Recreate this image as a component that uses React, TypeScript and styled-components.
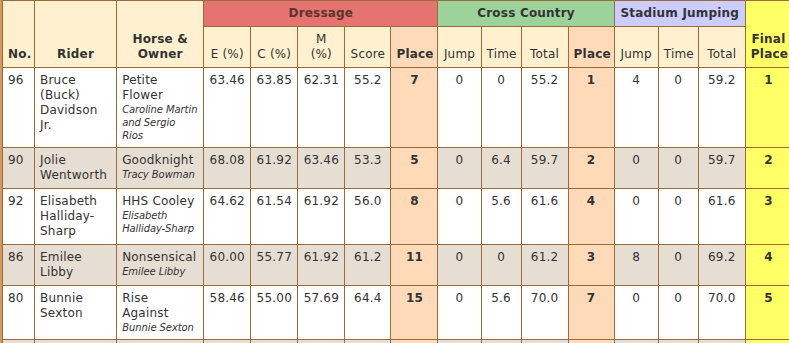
import React from "react";
import styled, { createGlobalStyle, css } from "styled-components";

const Global = createGlobalStyle`
  html, body { margin: 0; padding: 0; background: #ffffff; overflow: hidden; }
  body { font-family: "DejaVu Sans", Verdana, sans-serif; color: #333333; }
`;

const Frame = styled.div`
  border-left: 2px solid #d6995f;
  width: 800px;
`;

const Table = styled.table`
  border-collapse: collapse;
  table-layout: fixed;
  width: 790px;
  font-size: 12px;
  line-height: 15px;
  letter-spacing: 0.2px;
`;

type Tone = "plain" | "dressage" | "cross" | "stadium" | "final" | "place";

const toneBg: Record<Tone, string> = {
  plain: "#fff1d0",
  dressage: "#e5736f",
  cross: "#9dd39b",
  stadium: "#ccccff",
  final: "#ffff66",
  place: "#ffdab9",
};

const Th = styled.th<{ $tone?: Tone; $bold?: boolean }>`
  border: 1px solid #9c6b3a;
  padding: 5px 5px;
  vertical-align: bottom;
  text-align: center;
  font-weight: ${(p) => (p.$bold === false ? "normal" : "bold")};
  background: ${(p) => toneBg[p.$tone ?? "plain"]};
  color: ${(p) => (p.$tone === "dressage" ? "#5a3330" : "#333333")};
`;

const GroupTh = styled(Th)`
  vertical-align: middle;
`;

const Row = styled.tr<{ $alt?: boolean }>`
  background: ${(p) => (p.$alt ? "#e6ddd3" : "#ffffff")};
`;

const Td = styled.td<{ $align?: "left" | "center"; $tone?: "place" | "final"; $bold?: boolean }>`
  border: 1px solid #9c6b3a;
  padding: 5px 5px;
  vertical-align: top;
  text-align: ${(p) => p.$align ?? "center"};
  font-weight: ${(p) => (p.$bold ? "bold" : "normal")};
  ${(p) =>
    p.$tone &&
    css`
      background: ${toneBg[p.$tone]};
    `}
`;

const Owner = styled.div`
  font-size: 10px;
  line-height: 13px;
  font-style: italic;
  letter-spacing: -0.08px;
`;

const FillerRow = styled(Row)`
  height: 40px;
`;

const widths = [32, 82, 87, 47, 47, 47, 46, 47, 43, 40, 47, 46, 44, 40, 47, 46];

interface Entry {
  no: string;
  rider: string;
  horse: string;
  owner: string;
  e: string;
  c: string;
  m: string;
  score: string;
  dPlace: string;
  xJump: string;
  xTime: string;
  xTotal: string;
  xPlace: string;
  sJump: string;
  sTime: string;
  sTotal: string;
  final: string;
}

const entries: Entry[] = [
  { no: "96", rider: "Bruce (Buck) Davidson Jr.", horse: "Petite Flower", owner: "Caroline Martin and Sergio Rios", e: "63.46", c: "63.85", m: "62.31", score: "55.2", dPlace: "7", xJump: "0", xTime: "0", xTotal: "55.2", xPlace: "1", sJump: "4", sTime: "0", sTotal: "59.2", final: "1" },
  { no: "90", rider: "Jolie Wentworth", horse: "Goodknight", owner: "Tracy Bowman", e: "68.08", c: "61.92", m: "63.46", score: "53.3", dPlace: "5", xJump: "0", xTime: "6.4", xTotal: "59.7", xPlace: "2", sJump: "0", sTime: "0", sTotal: "59.7", final: "2" },
  { no: "92", rider: "Elisabeth Halliday-Sharp", horse: "HHS Cooley", owner: "Elisabeth Halliday-Sharp", e: "64.62", c: "61.54", m: "61.92", score: "56.0", dPlace: "8", xJump: "0", xTime: "5.6", xTotal: "61.6", xPlace: "4", sJump: "0", sTime: "0", sTotal: "61.6", final: "3" },
  { no: "86", rider: "Emilee Libby", horse: "Nonsensical", owner: "Emilee Libby", e: "60.00", c: "55.77", m: "61.92", score: "61.2", dPlace: "11", xJump: "0", xTime: "0", xTotal: "61.2", xPlace: "3", sJump: "8", sTime: "0", sTotal: "69.2", final: "4" },
  { no: "80", rider: "Bunnie Sexton", horse: "Rise Against", owner: "Bunnie Sexton", e: "58.46", c: "55.00", m: "57.69", score: "64.4", dPlace: "15", xJump: "0", xTime: "5.6", xTotal: "70.0", xPlace: "7", sJump: "0", sTime: "0", sTotal: "70.0", final: "5" },
];

export default function App() {
  return (
    <>
      <Global />
      <Frame>
        <Table>
          <colgroup>
            {widths.map((w, i) => (
              <col key={i} style={{ width: w }} />
            ))}
          </colgroup>
          <thead>
            <tr>
              <Th rowSpan={2}>No.</Th>
              <Th rowSpan={2}>Rider</Th>
              <Th rowSpan={2}>
                Horse &amp;
                <br />
                Owner
              </Th>
              <GroupTh colSpan={5} $tone="dressage">Dressage</GroupTh>
              <GroupTh colSpan={4} $tone="cross">Cross Country</GroupTh>
              <GroupTh colSpan={3} $tone="stadium">Stadium Jumping</GroupTh>
              <Th rowSpan={2} $tone="final">
                Final
                <br />
                Place
              </Th>
            </tr>
            <tr>
              <Th $bold={false}>E (%)</Th>
              <Th $bold={false}>C (%)</Th>
              <Th $bold={false}>
                M
                <br />
                (%)
              </Th>
              <Th $bold={false}>Score</Th>
              <Th $tone="place">Place</Th>
              <Th $bold={false}>Jump</Th>
              <Th $bold={false}>Time</Th>
              <Th $bold={false}>Total</Th>
              <Th $tone="place">Place</Th>
              <Th $bold={false}>Jump</Th>
              <Th $bold={false}>Time</Th>
              <Th $bold={false}>Total</Th>
            </tr>
          </thead>
          <tbody>
            {entries.map((r, i) => (
              <Row key={r.no} $alt={i % 2 === 1}>
                <Td $align="left">{r.no}</Td>
                <Td $align="left">{r.rider}</Td>
                <Td $align="left">
                  {r.horse}
                  <Owner>{r.owner}</Owner>
                </Td>
                <Td>{r.e}</Td>
                <Td>{r.c}</Td>
                <Td>{r.m}</Td>
                <Td>{r.score}</Td>
                <Td $tone="place" $bold>{r.dPlace}</Td>
                <Td>{r.xJump}</Td>
                <Td>{r.xTime}</Td>
                <Td>{r.xTotal}</Td>
                <Td $tone="place" $bold>{r.xPlace}</Td>
                <Td>{r.sJump}</Td>
                <Td>{r.sTime}</Td>
                <Td>{r.sTotal}</Td>
                <Td $tone="final" $bold>{r.final}</Td>
              </Row>
            ))}
            <FillerRow $alt>
              {widths.map((_, i) => (
                <Td key={i} $tone={i === 7 || i === 11 ? "place" : i === 15 ? "final" : undefined} />
              ))}
            </FillerRow>
          </tbody>
        </Table>
      </Frame>
    </>
  );
}
